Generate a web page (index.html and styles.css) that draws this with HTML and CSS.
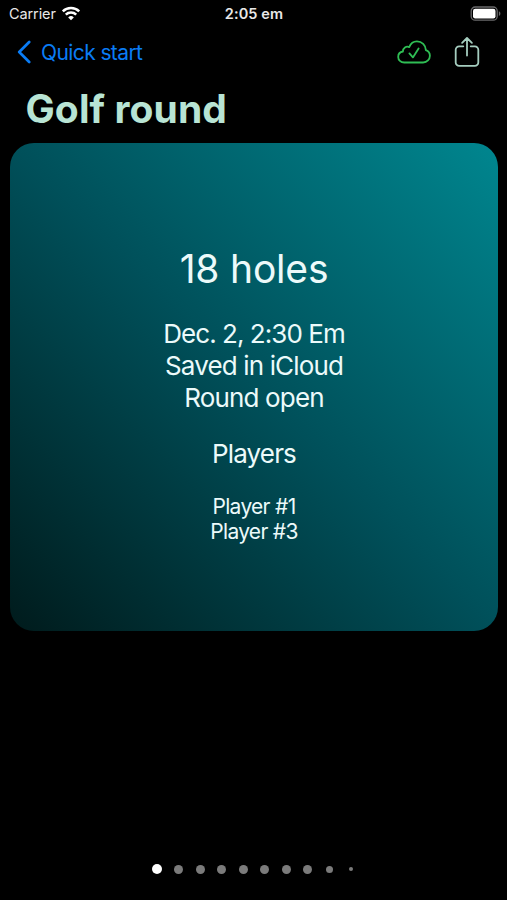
FILE: index.html
```
<!DOCTYPE html>
<html lang="en">

<head>
  <meta charset="UTF-8">
  <meta name="viewport" content="width=device-width, initial-scale=1.0">
  <title>Golf round</title>
  <link rel="stylesheet" href="styles.css">
</head>

<body>
  <div class="app">
    <div class="status-bar">
      <div class="carrier">
        <span class="carrier-name">Carrier</span>
        <svg class="wifi" width="20" height="15" viewBox="0 0 20 15">
          <path d="M1.800 5.400a11.600 11.600 0 0 1 16.400 0M4.800 8.700a7.400 7.400 0 0 1 10.400 0" fill="none" stroke="#fff" stroke-width="2.5"/>
          <path d="M10 14.2 7.2 11.4a4 4 0 0 1 5.6 0z" fill="#fff"/>
        </svg>
      </div>
      <span class="time">2:05 em</span>
      <svg class="battery" width="31" height="16" viewBox="0 0 31 16">
        <rect x="1.2" y="1" width="26" height="13.2" rx="4" fill="none" stroke="#69696b" stroke-width="1.3"/>
        <rect x="3" y="2.8" width="22.5" height="9.6" rx="2.2" fill="#fff"/>
        <path d="M28.9 5.3c2 .8 2 3.8 0 4.6z" fill="#69696b"/>
      </svg>
    </div>

    <div class="nav-bar">
      <a class="back" href="#">
        <svg width="14" height="24" viewBox="0 0 14 24">
          <path d="M12.2 2 2.2 12l10 10" fill="none" stroke="#0a7cf5" stroke-width="2.7" stroke-linecap="round" stroke-linejoin="round"/>
        </svg>
        <span class="back-label">Quick start</span>
      </a>
      <div class="actions">
        <svg width="34" height="24" viewBox="0 0 34 24">
          <path d="M7.3 22.5C3.7 22.5 1.2 20 1.2 16.9c0-2.9 2-5 4.7-5.4C5.7 8 9.4 5.7 12.2 7.1 13.6 3.5 16.3 1.3 19.9 1.3c5 0 8.8 3.8 9 8.8 2.4.9 4 3.1 4 5.6 0 3.7-2.9 6.8-6.8 6.8z" fill="none" stroke="#2fbd54" stroke-width="1.8" stroke-linejoin="round"/>
          <path d="m12.4 13.4 3.5 4L21.6 8.4" fill="none" stroke="#2fbd54" stroke-width="1.8" stroke-linecap="round" stroke-linejoin="round"/>
        </svg>
        <svg width="26" height="32" viewBox="0 0 26 32">
          <path d="M9.3 10.3H5.2a3.5 3.5 0 0 0-3.5 3.5v12.600a3.5 3.5 0 0 0 3.5 3.5h15.600a3.5 3.5 0 0 0 3.5-3.5V13.800a3.5 3.5 0 0 0-3.5-3.5h-4.100M13 19.5V2.3M8.1 6.9 13 2l4.900 4.900" fill="none" stroke="#a5cdbf" stroke-width="1.8" stroke-linecap="round" stroke-linejoin="round"/>
        </svg>
      </div>
    </div>

    <h1 class="title">Golf round</h1>

    <div class="card">
      <div class="holes">18 holes</div>
      <div class="details">
        <div class="date">Dec. 2, 2:30 Em</div>
        <div class="saved">Saved in iCloud</div>
        <div class="state">Round open</div>
      </div>
      <div class="players-title">Players</div>
      <div class="players">
        <div>Player #1</div>
        <div>Player #3</div>
      </div>
    </div>

    <div class="page-dots">
      <span class="dot active"></span>
      <span class="dot"></span>
      <span class="dot"></span>
      <span class="dot"></span>
      <span class="dot"></span>
      <span class="dot"></span>
      <span class="dot"></span>
      <span class="dot"></span>
      <span class="dot small"></span>
      <span class="dot tiny"></span>
    </div>
  </div>
</body>

</html>
```
FILE: styles.css
```
body {
  margin: 0;
  background-color: #000;
  color: #ecfafa;
  font-family: Inter, "Liberation Sans", sans-serif;
}

.app {
  display: flex;
  flex-direction: column;
  height: 900px;
  overflow: hidden;
}

.status-bar {
  display: grid;
  grid-template-columns: 1fr auto 1fr;
  align-items: center;
  height: 27px;
  padding: 0 6px 0 9px;
  box-sizing: border-box;
  font-size: 14.5px;
  color: #e8e8e8;
}

.carrier {
  display: flex;
  align-items: center;
  gap: 5px;
  letter-spacing: -0.1px;
}

.time {
  margin-right: 2px;
  font-weight: 600;
  letter-spacing: 0.1px;
}

.battery {
  justify-self: end;
}

.nav-bar {
  display: flex;
  justify-content: space-between;
  align-items: center;
  height: 50px;
  padding: 0 27px 0 17px;
}

.back {
  display: flex;
  align-items: center;
  gap: 10px;
  color: #0a7cf5;
  font-size: 21px;
  letter-spacing: -0.6px;
  text-decoration: none;
}

.actions {
  display: flex;
  align-items: center;
  gap: 23px;
}

.title {
  margin: 8px 0 0 25.500px;
  font-size: 39px;
  line-height: 48px;
  font-weight: 700;
  letter-spacing: 0.1px;
  color: #b8e4d4;
}

.card {
  display: flex;
  flex-direction: column;
  align-items: center;
  height: 488px;
  margin: 10px 9px 0 10px;
  padding-top: 102px;
  box-sizing: border-box;
  border-radius: 24px;
  background: linear-gradient(45deg, #001b1c, #00505a 50%, #00868f);
}

.holes {
  font-size: 39px;
  line-height: 48px;
  letter-spacing: -0.2px;
}

.details {
  margin-top: 25px;
  font-size: 26px;
  line-height: 32px;
  letter-spacing: -0.85px;
  text-align: center;
}

.date {
  letter-spacing: -0.95px;
}

.players-title {
  margin-top: 24px;
  font-size: 26px;
  line-height: 32px;
  letter-spacing: -0.85px;
}

.players {
  margin-top: 24px;
  font-size: 21px;
  line-height: 25px;
  letter-spacing: -0.7px;
  text-align: center;
}

.page-dots {
  display: flex;
  justify-content: center;
  margin: 233px 0 0 1px;
}

.dot {
  display: flex;
  justify-content: center;
  align-items: center;
  width: 21.6px;
  height: 10px;
}

.dot::before {
  content: "";
  width: 9px;
  height: 9px;
  border-radius: 50%;
  background-color: #7b7b7b;
}

.dot.active::before {
  width: 10px;
  height: 10px;
  background-color: #fff;
}

.dot.small::before {
  width: 7px;
  height: 7px;
}

.dot.tiny::before {
  width: 4px;
  height: 4px;
}
```
